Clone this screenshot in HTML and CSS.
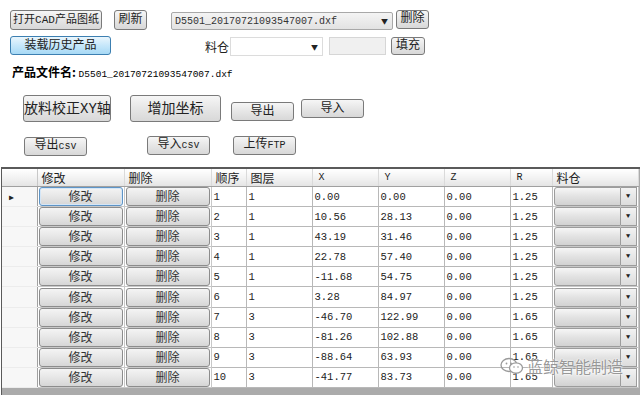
FILE: index.html
```html
<!DOCTYPE html>
<html lang="zh-CN">
<head>
    <meta charset="UTF-8">
    <title>CAD产品图纸</title>
    <link rel="stylesheet" href="styles.css">
</head>
<body>
    <div class="form">
        <div class="row row-open">
            <button class="btn btn-open">打开CAD产品图纸</button>
            <button class="btn btn-refresh">刷新</button>
            <div class="combo combo-file">
                <span class="combo-text">D5501_20170721093547007.dxf</span>
                <span class="arrow">&#9660;</span>
            </div>
            <button class="btn btn-del">删除</button>
        </div>

        <div class="row row-load">
            <button class="btn btn-blue">装载历史产品</button>
            <span class="label">料仓</span>
            <div class="combo combo-bin">
                <span class="combo-text"></span>
                <span class="arrow">&#9660;</span>
            </div>
            <div class="textbox"></div>
            <button class="btn btn-fill">填充</button>
        </div>

        <div class="filename">
            <b>产品文件名:</b>
            <span class="mono">D5501_20170721093547007.dxf</span>
        </div>

        <div class="row row-tools">
            <button class="btn btn-big btn-calib">放料校正XY轴</button>
            <button class="btn btn-big btn-add">增加坐标</button>
            <button class="btn btn-small btn-export">导出</button>
            <button class="btn btn-small btn-import">导入</button>
        </div>

        <div class="row row-csv">
            <button class="btn btn-small btn-excsv">导出<span class="mono">csv</span></button>
            <button class="btn btn-small btn-imcsv">导入<span class="mono">csv</span></button>
            <button class="btn btn-small btn-ftp">上传<span class="mono">FTP</span></button>
        </div>

        <div class="grid">
            <table>
                <colgroup>
                    <col class="c-head">
                    <col class="c-btn">
                    <col class="c-btn">
                    <col class="c-seq">
                    <col class="c-layer">
                    <col class="c-num">
                    <col class="c-num">
                    <col class="c-num">
                    <col class="c-r">
                    <col class="c-bin">
                </colgroup>
                <thead>
                    <tr>
                        <th class="corner"></th>
                        <th>修改</th>
                        <th>删除</th>
                        <th>顺序</th>
                        <th>图层</th>
                        <th class="mono">X</th>
                        <th class="mono">Y</th>
                        <th class="mono">Z</th>
                        <th class="mono">R</th>
                        <th>料仓</th>
                    </tr>
                </thead>
                <tbody id="rows"></tbody>
            </table>
        </div>

        <div class="watermark">
            <svg width="24" height="18" viewBox="0 0 24 18">
                <ellipse cx="9" cy="8" rx="8" ry="6.5" fill="none" stroke="#9a9a9a" stroke-width="1.3"/>
                <ellipse cx="16" cy="11" rx="6.5" ry="5.2" fill="#fff" stroke="#9a9a9a" stroke-width="1.3"/>
                <circle cx="6.5" cy="6.5" r="0.9" fill="#9a9a9a"/>
                <circle cx="11" cy="6.5" r="0.9" fill="#9a9a9a"/>
                <circle cx="14" cy="10" r="0.8" fill="#9a9a9a"/>
                <circle cx="18" cy="10" r="0.8" fill="#9a9a9a"/>
            </svg>
            <span>蓝鲸智能制造</span>
        </div>
    </div>

    <script>
        const points = [
            [1, 1, '0.00', '0.00', '0.00', '1.25'],
            [2, 1, '10.56', '28.13', '0.00', '1.25'],
            [3, 1, '43.19', '31.46', '0.00', '1.25'],
            [4, 1, '22.78', '57.40', '0.00', '1.25'],
            [5, 1, '-11.68', '54.75', '0.00', '1.25'],
            [6, 1, '3.28', '84.97', '0.00', '1.25'],
            [7, 3, '-46.70', '122.99', '0.00', '1.65'],
            [8, 3, '-81.26', '102.88', '0.00', '1.65'],
            [9, 3, '-88.64', '63.93', '0.00', '1.65'],
            [10, 3, '-41.77', '83.73', '0.00', '1.65']
        ];

        const tbody = document.getElementById('rows');
        points.forEach((p, i) => {
            tbody.innerHTML += `
                <tr>
                    <td class="rowhead">${i === 0 ? '<span class="current">&#9654;</span>' : ''}</td>
                    <td class="cellbtn"><div class="gbtn ${i === 0 ? 'focus' : ''}">修改</div></td>
                    <td class="cellbtn"><div class="gbtn">删除</div></td>
                    <td>${p[0]}</td>
                    <td>${p[1]}</td>
                    <td>${p[2]}</td>
                    <td>${p[3]}</td>
                    <td>${p[4]}</td>
                    <td>${p[5]}</td>
                    <td class="cellbin"><div class="gcombo"><span></span><span class="garrow">&#9660;</span></div></td>
                </tr>
            `;
        });
    </script>
</body>
</html>
```

FILE: styles.css
```css
body {
    margin: 0;
    background: #fff;
    font-family: "Noto Sans CJK SC", sans-serif;
    font-size: 12px;
    color: #000;
    overflow: hidden;
}
.form {
    position: relative;
    width: 640px;
    height: 395px;
}
.mono {
    font-family: "Liberation Mono", "Noto Sans CJK SC", monospace;
    font-size: 10px;
}
.row {
    display: flex;
    align-items: flex-start;
}
.btn {
    box-sizing: border-box;
    height: 20px;
    padding: 0;
    border: 1px solid #7a7a7a;
    border-radius: 3px;
    background: linear-gradient(#f6f6f6, #e6e6e6 50%, #d8d8d8);
    font-family: "Liberation Mono", "Noto Sans CJK SC", sans-serif;
    font-size: 12px;
    line-height: 17px;
    color: #222;
    white-space: nowrap;
    overflow: hidden;
}
.row-open {
    padding: 10px 0 0 10px;
    height: 26px;
}
.btn-open {
    width: 92px;
    font-size: 11px;
}
.btn-refresh {
    width: 33px;
    margin-left: 12px;
}
.combo {
    box-sizing: border-box;
    display: flex;
    align-items: center;
    justify-content: space-between;
    border: 1px solid #a8a8a8;
    padding: 0 4px 0 3px;
}
.combo-file {
    width: 222px;
    height: 18px;
    margin: 2px 0 0 24px;
    background: linear-gradient(#f4f4f4, #e2e2e2);
    border-radius: 2px;
}
.combo-text {
    font-family: "Liberation Mono", monospace;
    font-size: 10px;
    color: #333;
}
.arrow {
    font-size: 7px;
    color: #222;
}
.btn-del {
    width: 33px;
    height: 19px;
    margin-left: 3px;
}
.row-load {
    height: 28px;
}
.btn-blue {
    width: 101px;
    height: 19px;
    margin-left: 10px;
    border-color: #3c7fb1;
    background: linear-gradient(#eaf6fd, #c6e7fa 50%, #a7d9f5);
    line-height: 16px;
}
.label {
    margin: 2px 0 0 94px;
    width: 25px;
    font-size: 12px;
    color: #222;
}
.combo-bin {
    width: 93px;
    height: 19px;
    margin-top: 1px;
    background: #fff;
    border-color: #dcdcdc;
}
.textbox {
    box-sizing: border-box;
    width: 57px;
    height: 18px;
    margin: 1px 0 0 6px;
    background: #f0f0f0;
    border: 1px solid #d6d6d6;
}
.btn-fill {
    width: 34px;
    height: 18px;
    margin: 1px 0 0 5px;
    line-height: 15px;
}
.filename {
    height: 31px;
    padding: 0 0 0 12px;
    line-height: 16px;
}
.filename b {
    font-size: 12px;
}
.filename .mono {
    font-size: 9.5px;
}
.row-tools {
    height: 41px;
}
.btn-big {
    height: 27px;
    font-size: 14px;
    line-height: 24px;
}
.btn-calib {
    width: 88px;
    margin-left: 23px;
}
.btn-add {
    width: 91px;
    margin-left: 19px;
}
.btn-small {
    width: 63px;
    height: 19px;
    line-height: 16px;
}
.btn-export {
    margin: 7px 0 0 10px;
}
.btn-import {
    margin: 4px 0 0 7px;
}
.row-csv {
    height: 31px;
}
.btn-excsv {
    margin: 1px 0 0 24px;
}
.btn-imcsv {
    margin-left: 60px;
}
.btn-ftp {
    margin-left: 23px;
}
.grid {
    box-sizing: border-box;
    width: 639px;
    height: 228px;
    margin-left: 1px;
    background: #ababab;
    border-top: 2px solid #5a5a5a;
    border-left: 1px solid #5a5a5a;
    overflow: hidden;
}
table {
    table-layout: fixed;
    border-collapse: collapse;
    width: 636px;
    background: #fff;
}
.c-head { width: 35px; }
.c-btn { width: 87px; }
.c-seq { width: 35px; }
.c-layer { width: 66px; }
.c-num { width: 66px; }
.c-r { width: 42px; }
.c-bin { width: 86px; }
th {
    height: 16px;
    padding: 0 0 0 4px;
    text-align: left;
    font-weight: normal;
    font-size: 12px;
    color: #222;
    background: linear-gradient(#ffffff, #f0f0f0 60%, #e4e4e4);
    border-right: 1px solid #dadada;
    border-bottom: 1px solid #a0a0a0;
}
th.mono {
    font-size: 10px;
    padding-left: 6px;
}
th.corner {
    border-right: 1px solid #c8c8c8;
}
td {
    height: 19.1px;
    padding: 0 0 0 2px;
    border: 1px solid #b8b8b8;
    font-family: "Liberation Mono", monospace;
    font-size: 10.5px;
    color: #222;
    white-space: nowrap;
    overflow: hidden;
}
td.rowhead {
    background: #f7f7f7;
    border-left: none;
    border-top-color: #ececec;
    border-bottom-color: #ececec;
    border-right-color: #a0a0a0;
    padding-left: 7px;
}
.current {
    font-size: 8px;
    color: #222;
}
td.cellbtn,
td.cellbin {
    padding: 0;
    border-color: #c8c8c8;
}
.gbtn {
    box-sizing: border-box;
    height: 19px;
    margin: 0 1px;
    border: 1px solid #8c8c8c;
    border-radius: 3px;
    background: linear-gradient(#f4f4f4, #e6e6e6 50%, #d6d6d6);
    font-family: "Noto Sans CJK SC", sans-serif;
    font-size: 12px;
    line-height: 16px;
    text-align: center;
    color: #333;
}
.gbtn.focus {
    border-color: #5e94c6;
    box-shadow: inset 0 0 0 1px #d4e6f7;
}
.gcombo {
    display: flex;
    height: 19px;
    margin: 0 1px;
}
.gcombo span:first-child {
    flex: 1;
    border: 1px solid #9c9c9c;
    border-radius: 3px 0 0 3px;
    background: linear-gradient(#f6f6f6, #e2e2e2 50%, #d2d2d2);
}
.garrow {
    box-sizing: border-box;
    width: 16px;
    border: 1px solid #9c9c9c;
    border-left: none;
    background: linear-gradient(#f2f2f2, #dcdcdc);
    font-size: 7px;
    line-height: 17px;
    text-align: center;
    color: #222;
}
.watermark {
    position: absolute;
    left: 500px;
    top: 354px;
    display: flex;
    align-items: center;
    gap: 3px;
    color: rgba(120, 120, 120, 0.75);
    font-size: 16px;
    text-shadow: 0 0 2px #fff, 0 0 2px #fff;
}
```
